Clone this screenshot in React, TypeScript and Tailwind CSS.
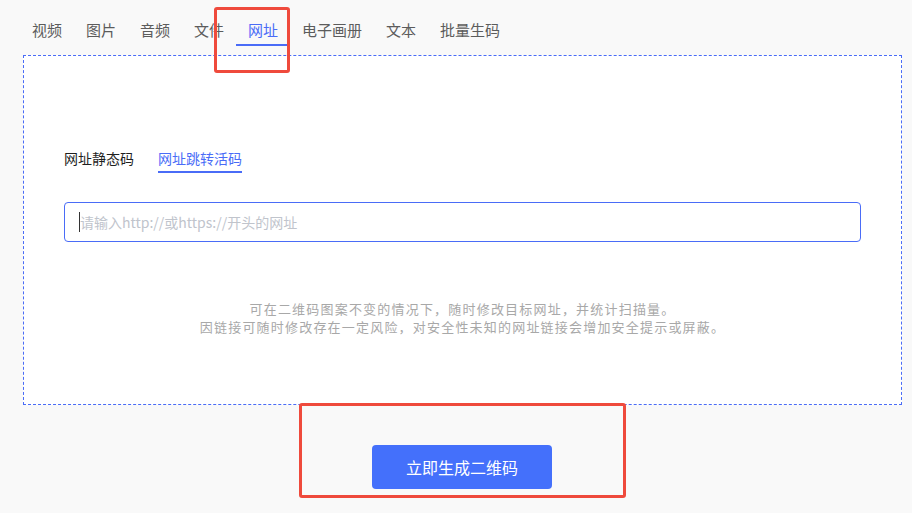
const tabs = ["视频", "图片", "音频", "文件", "网址", "电子画册", "文本", "批量生码"];

export default function App() {
  return (
    <div
      className="relative min-h-[513px] w-[912px] overflow-hidden bg-[#f9f9f9]"
      style={{ fontFamily: '"Noto Sans CJK SC", "Noto Sans", sans-serif' }}
    >
      {/* top tabs */}
      <div className="flex pl-5">
        {tabs.map((t) => {
          const active = t === "网址";
          return (
            <div
              key={t}
              className={
                active
                  ? "border-b-2 border-[#4a6cf7] px-3 pb-1 pt-5 text-[15px] leading-5 text-[#4a6cf7]"
                  : "border-b-2 border-transparent px-3 pb-1 pt-5 text-[15px] leading-5 text-[#5c5c5c]"
              }
            >
              {t}
            </div>
          );
        })}
      </div>

      {/* dashed panel */}
      <div className="ml-[23px] mt-[9px] h-[350px] w-[879px] border border-dashed border-[#4a6cf7] bg-white px-10 pt-[92px]">
        <div className="flex gap-6 text-[14px] leading-5">
          <div className="border-b-2 border-transparent pb-[3px] text-[#1f1f1f]">网址静态码</div>
          <div className="border-b-2 border-[#4a6cf7] pb-[3px] text-[#4a6cf7]">网址跳转活码</div>
        </div>

        <div className="mt-[29px] flex h-10 items-center rounded border border-[#4a6cf7] pl-[14px] pr-4">
          <span className="h-[20px] w-px bg-[#333]" />
          <span className="text-[14px] text-[#c0c4cc]">请输入http://或https://开头的网址</span>
        </div>

        <div className="mt-[58px] text-center text-[13px] leading-[18px] tracking-[1.2px] text-[#a8a8a8]">
          <p>可在二维码图案不变的情况下，随时修改目标网址，并统计扫描量。</p>
          <p>因链接可随时修改存在一定风险，对安全性未知的网址链接会增加安全提示或屏蔽。</p>
        </div>
      </div>

      {/* action */}
      <div className="flex justify-center pl-[12px] pt-10">
        <button className="h-[44px] w-[180px] rounded bg-[#4470fb] text-[16px] text-white">
          立即生成二维码
        </button>
      </div>

      {/* annotation frames */}
      <div className="absolute left-[214px] top-[7px] h-[66px] w-[76px] rounded-[3px] border-[3px] border-[#ef4a3c]" />
      <div className="absolute left-[299px] top-[403px] h-[95px] w-[327px] rounded-[3px] border-[3px] border-[#ef4a3c]" />
    </div>
  );
}
